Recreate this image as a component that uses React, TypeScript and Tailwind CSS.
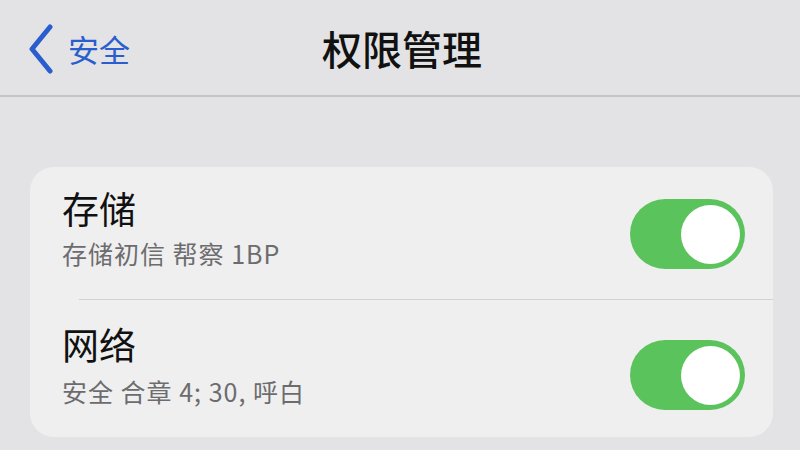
import React from "react";

const font = { fontFamily: '"Noto Sans CJK SC", "Noto Sans", sans-serif' };

function Toggle() {
  return (
    <div className="flex h-[70px] w-[115px] shrink-0 items-center justify-end rounded-full bg-[#5ac35c] pr-[5px]">
      <div className="h-[59px] w-[59px] rounded-full bg-white" />
    </div>
  );
}

function Row({ title, sub, pt, gap, toggleTop }: { title: string; sub: string; pt: string; gap: string; toggleTop: string }) {
  return (
    <div className="flex items-start justify-between pl-[32px] pr-[28px]">
      <div className={`flex flex-col ${pt}`}>
        <div className="text-[37px] leading-[44px] text-[#111]">{title}</div>
        <div className={`${gap} text-[25px] leading-[30px] tracking-[1px] text-[#6c6c6e]`}>{sub}</div>
      </div>
      <div className={toggleTop}>
        <Toggle />
      </div>
    </div>
  );
}

export default function App() {
  return (
    <div className="h-[450px] w-[800px] overflow-hidden bg-[#e3e3e5]" style={font}>
      <div className="grid h-[97px] grid-cols-[1fr_auto_1fr] items-center border-b-2 border-[#c4c4c6]">
        <div className="flex items-center pl-[27px] pt-[2px]">
          <svg width="28" height="50" viewBox="0 0 28 50" fill="none">
            <path d="M23 3 L5 25 L23 47" stroke="#2a5ecd" strokeWidth="5" strokeLinecap="round" strokeLinejoin="round" />
          </svg>
          <span className="ml-[13px] text-[31px] leading-none text-[#2a5ecd]">安全</span>
        </div>
        <div className="pl-[4px] text-[40px] font-medium leading-none text-[#111]">权限管理</div>
        <div />
      </div>
      <div className="ml-[30px] mr-[27px] mt-[70px] flex flex-col rounded-[24px] bg-[#efeff0]">
        <div className="h-[133px] border-b border-[#d2d2d4] [border-image:linear-gradient(to_right,transparent_50px,#d2d2d4_50px)_1]">
          <Row title="存储" sub="存储初信 帮察 1BP" pt="pt-[19px]" gap="mt-[8px]" toggleTop="pt-[32px]" />
        </div>
        <div className="h-[137px]">
          <Row title="网络" sub="安全 合章 4; 30, 呼白" pt="pt-[22px]" gap="mt-[10px]" toggleTop="pt-[40px]" />
        </div>
      </div>
    </div>
  );
}
